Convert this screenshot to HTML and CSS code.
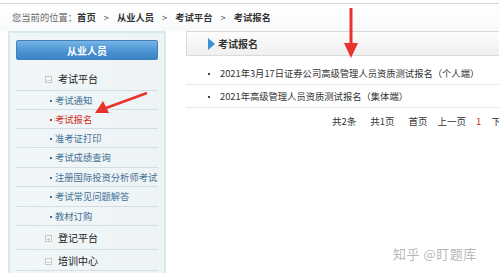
FILE: index.html
```html
<!DOCTYPE html>
<html lang="zh">
<head>
<meta charset="utf-8">
<link rel="stylesheet" href="styles.css">
</head>
<body>
<div class="topline"></div>
<div class="crumb">您当前的位置：<b>首页</b><span class="sep">&gt;</span><b>从业人员</b><span class="sep">&gt;</span><b>考试平台</b><span class="sep">&gt;</span><b>考试报名</b></div>
<div class="main">
  <aside class="side">
    <div class="side-head">从业人员</div>
    <ul class="menu">
      <li class="top"><span class="box">−</span>考试平台</li>
      <li class="sub"><span class="dot"></span>考试通知</li>
      <li class="sub active"><span class="dot"></span>考试报名</li>
      <li class="sub"><span class="dot"></span>准考证打印</li>
      <li class="sub"><span class="dot"></span>考试成绩查询</li>
      <li class="sub"><span class="dot"></span>注册国际投资分析师考试</li>
      <li class="sub"><span class="dot"></span>考试常见问题解答</li>
      <li class="sub"><span class="dot"></span>教材订购</li>
      <li class="top tall"><span class="box">+</span>登记平台</li>
      <li class="top tall"><span class="box">−</span>培训中心</li>
    </ul>
  </aside>
  <section class="content">
    <div class="c-head"><span class="tri"></span>考试报名</div>
    <ul class="list">
      <li><span class="bul"></span>2021年3月17日证券公司高级管理人员资质测试报名（个人端）</li>
      <li><span class="bul"></span>2021年高级管理人员资质测试报名（集体端）</li>
    </ul>
    <div class="pager"><span class="p1">共2条</span><span class="p2">共1页</span><span class="p3">首页</span><span class="p4">上一页</span><span class="cur">1</span><span>下一页</span></div>
  </section>
</div>
<svg class="arrow arrow-down" width="14" height="52" viewBox="0 0 14 52"><line x1="7" y1="0" x2="7" y2="38" stroke="#e8322c" stroke-width="3"/><polygon points="0,35 14,35 7,50" fill="#e8322c"/></svg>
<svg class="arrow arrow-left" width="56" height="26" viewBox="0 0 56 26"><line x1="53" y1="2" x2="12" y2="17" stroke="#e8322c" stroke-width="2.5"/><polygon points="1,22 9,10 15,22" fill="#e8322c"/></svg>
<div class="mark">知乎 @盯题库</div>
</body>
</html>
```
FILE: styles.css
```css
* { box-sizing: border-box; }
html, body { margin: 0; padding: 0; }
body {
  width: 499px; height: 273px; overflow: hidden; position: relative;
  background: #fff;
  font-family: "Noto Sans CJK SC", "Noto Sans", sans-serif;
  font-size: 9.5px; color: #333;
}
ul { list-style: none; margin: 0; padding: 0; }
.topline { height: 4px; border-bottom: 1px solid #d6d6d6; }
.crumb {
  height: 27px; line-height: 26px; padding-left: 12px;
  color: #666; font-size: 9.3px; white-space: nowrap;
  background: linear-gradient(#fff, #f7f9fa);
}
.crumb b { color: #333; font-weight: bold; }
.crumb .sep { color: #666; margin: 0 8px; }
.main { display: flex; gap: 20px; padding-left: 8px; }
.side {
  flex: none;
  width: 158px; height: 250px;
  border: 2px solid #d7eaec; border-bottom: none;
  background: linear-gradient(90deg, #f1f6f8, #eef3f6);
  padding: 7px 6px 0 6px;
}
.side-head {
  height: 20px; line-height: 19px; text-align: center;
  color: #fff; font-weight: bold; font-size: 10px;
  background: linear-gradient(#77b6e6, #4b93d2 55%, #3b83c6);
  border: 1px solid #3f80bd; border-radius: 2px;
  margin-bottom: 8px;
}
.menu li { border-bottom: 1px solid #d3dde3; white-space: nowrap; }
.menu .top { height: 23px; line-height: 22px; padding-left: 29px; color: #222; font-size: 10px; }
.menu .top.tall { height: 21px; line-height: 22px; }
.menu .tall:nth-last-child(2) { height: 24px; line-height: 24px; }
.box {
  display: inline-block; width: 7px; height: 7px; line-height: 6px;
  border: 1px solid #c8c8c8; color: #aaa; font-size: 7px; text-align: center;
  margin-right: 6px; vertical-align: 0; background: #f8f8f8;
}
.menu .sub { height: 19px; line-height: 19px; padding-left: 34px; color: #3f6f95; font-size: 9.3px; }
.menu .sub:nth-child(n+5) { height: 19.5px; }
.menu .active { color: #d22b22; }
.dot {
  display: inline-block; width: 2px; height: 2px; background: #3f6f95;
  margin-right: 3px; vertical-align: 2px;
}
.menu .active .dot { background: #d22b22; }
.content { flex: 1; min-width: 0; overflow: hidden; }
.c-head {
  height: 25px; line-height: 24px; padding-left: 21px;
  border: 1px solid #dadada; border-right: none;
  background: linear-gradient(#fdfdfd, #efefef);
  font-weight: bold; color: #333; font-size: 10px;
  display: flex; align-items: center;
}
.tri {
  width: 0; height: 0; margin-right: 3px;
  border-top: 6px solid transparent; border-bottom: 6px solid transparent;
  border-left: 7px solid #3d8fd8;
}
.list { padding-top: 6px; }
.list li {
  height: 23px; line-height: 22px; padding-left: 22px; white-space: nowrap;
  border-bottom: 1px solid #e6e6e6; color: #333; font-size: 9.3px;
}
.bul {
  display: inline-block; width: 2px; height: 2px; background: #444;
  margin-right: 10px; vertical-align: 2px;
}
.pager { padding-left: 146px; margin-top: 6px; font-size: 9.5px; color: #333; white-space: nowrap; }
.pager span { margin-right: 14px; }
.pager .p3 { margin-right: 10px; }
.pager .p4 { margin-right: 10px; }
.pager .cur { color: #d22b22; margin-right: 10px; }
.arrow { position: absolute; }
.arrow-down { left: 344px; top: 8px; }
.arrow-left { left: 94px; top: 91px; }
.mark {
  position: absolute; left: 393px; top: 244px;
  color: rgba(150,150,150,0.7); font-size: 13px; letter-spacing: 0.5px;
}
```
